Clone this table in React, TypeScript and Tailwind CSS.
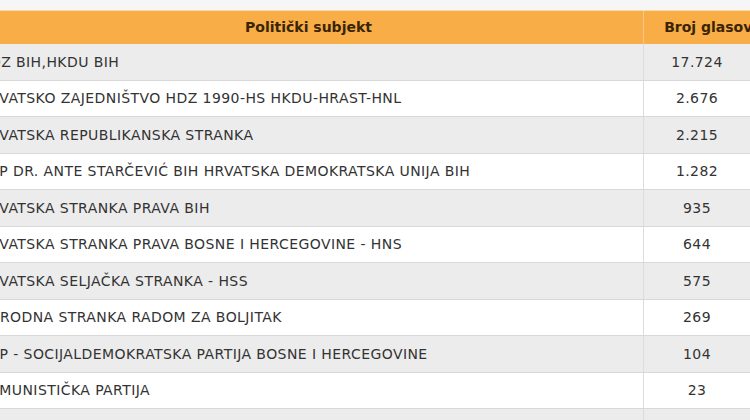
import React from "react";

const rows = [
  { name: "HDZ BIH,HKDU BIH", votes: "17.724" },
  { name: "HRVATSKO ZAJEDNIŠTVO HDZ 1990-HS HKDU-HRAST-HNL", votes: "2.676" },
  { name: "HRVATSKA REPUBLIKANSKA STRANKA", votes: "2.215" },
  { name: "HSP DR. ANTE STARČEVIĆ BIH HRVATSKA DEMOKRATSKA UNIJA BIH", votes: "1.282" },
  { name: "HRVATSKA STRANKA PRAVA BIH", votes: "935" },
  { name: "HRVATSKA STRANKA PRAVA BOSNE I HERCEGOVINE - HNS", votes: "644" },
  { name: "HRVATSKA SELJAČKA STRANKA - HSS", votes: "575" },
  { name: "NARODNA STRANKA RADOM ZA BOLJITAK", votes: "269" },
  { name: "SDP - SOCIJALDEMOKRATSKA PARTIJA BOSNE I HERCEGOVINE", votes: "104" },
  { name: "KOMUNISTIČKA PARTIJA", votes: "23" },
  { name: "", votes: "" },
];

export default function App() {
  return (
    <div className="w-[750px] h-[420px] overflow-hidden bg-[#f6f6f6] pt-[10px] font-['DejaVu_Sans',Verdana,sans-serif] text-[14px] text-[#333]">
      <div className="-ml-[26px] w-[808px]">
        {/* header */}
        <div className="flex h-[34px] bg-[#f8ad47] border-t border-[#fbd9a6] font-bold text-[#3a2406]">
          <div className="w-[670px] flex items-center justify-center border-r border-[#f3c98a]">
            Politički subjekt
          </div>
          <div className="w-[138px] flex items-center justify-center">
            Broj glasova
          </div>
        </div>

        {rows.map((r, i) => (
          <div
            key={i}
            className={
              "flex h-[36.5px] border-b border-[#d8d8d8] tracking-[0.42px] " +
              (i % 2 === 0 ? "bg-[#ececec]" : "bg-white")
            }
          >
            <div className="w-[670px] flex items-center pt-[1px] pl-[5px] border-r border-[#dcdcdc] whitespace-nowrap">
              {r.name}
            </div>
            <div className="w-[138px] flex items-center justify-center pt-[1px] pr-[32px]">
              {r.votes}
            </div>
          </div>
        ))}
      </div>
    </div>
  );
}
